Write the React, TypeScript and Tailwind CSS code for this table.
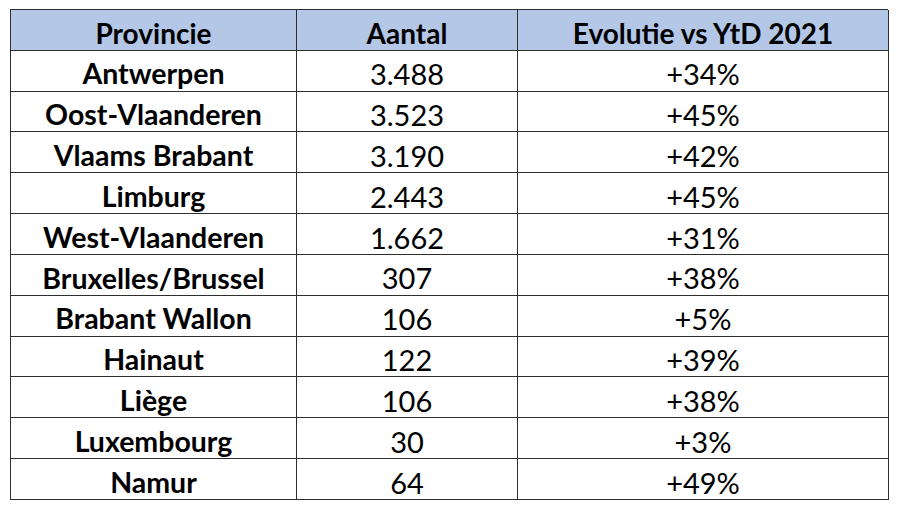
const rows: [string, string, string][] = [
  ["Antwerpen", "3.488", "+34%"],
  ["Oost-Vlaanderen", "3.523", "+45%"],
  ["Vlaams Brabant", "3.190", "+42%"],
  ["Limburg", "2.443", "+45%"],
  ["West-Vlaanderen", "1.662", "+31%"],
  ["Bruxelles/Brussel", "307", "+38%"],
  ["Brabant Wallon", "106", "+5%"],
  ["Hainaut", "122", "+39%"],
  ["Liège", "106", "+38%"],
  ["Luxembourg", "30", "+3%"],
  ["Namur", "64", "+49%"],
];

const cell = "flex items-center justify-center border-r border-b border-[#2e2e2e] pt-[6px]";

export default function App() {
  return (
    <div className="h-[507px] w-[900px] bg-white pl-[10px] pt-[9px] font-['Lato',sans-serif] text-black">
      <div className="grid h-[491px] w-[878px] grid-cols-[286px_221px_371px] grid-rows-12 border-l border-t border-[#2e2e2e] leading-none">
        <div className={`${cell} bg-[#b4c7e7] text-[28px] font-bold`}>Provincie</div>
        <div className={`${cell} bg-[#b4c7e7] text-[28px] font-bold`}>Aantal</div>
        <div className={`${cell} bg-[#b4c7e7] text-[28px] font-bold`}>Evolutie vs YtD 2021</div>
        {rows.map(([name, count, evo]) => (
          <div key={name} className="contents">
            <div className={`${cell} text-[28.5px] font-bold`}>{name}</div>
            <div className={`${cell} text-[29px]`}>{count}</div>
            <div className={`${cell} text-[29px]`}>{evo}</div>
          </div>
        ))}
      </div>
    </div>
  );
}
